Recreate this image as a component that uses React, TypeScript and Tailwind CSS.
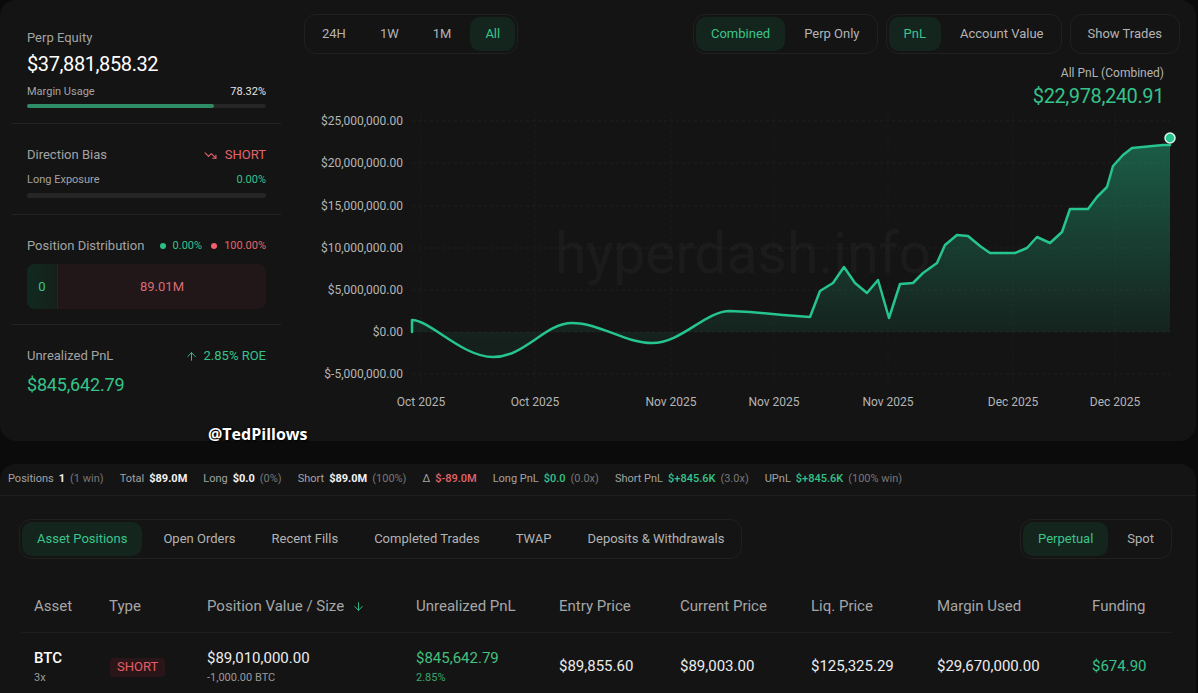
import React from "react";
import { TrendingDown, ArrowUp, ArrowDown } from "lucide-react";

const LINE =
  "M412,332 L412,320 C430,320 462,357 493,357 C525,357 545,323 572,323 C600,323 625,343 652,343 C682,343 705,311 730,311 L750,312 L783,315 L810,317 L820,291 L833,283 L844,267 L855,283 L867,293 L878,280 L889,318 L900,284 L913,283 L923,273 L937,263 L945,245 L957,235 L968,236 L980,246 L990,253 L1015,253 L1027,248 L1037,237 L1050,243 L1062,232 L1070,209 L1088,209 L1097,197 L1107,187 L1113,166 L1123,155 L1132,148 L1163,145 L1170,145";
const AREA = LINE + " L1170,332 Z";

const Y_TICKS = [
  { y: 121, l: "$25,000,000.00" },
  { y: 163, l: "$20,000,000.00" },
  { y: 206, l: "$15,000,000.00" },
  { y: 248, l: "$10,000,000.00" },
  { y: 290, l: "$5,000,000.00" },
  { y: 332, l: "$0.00" },
  { y: 374, l: "$-5,000,000.00" },
];
const X_TICKS = [
  { x: 421, l: "Oct 2025" },
  { x: 535, l: "Oct 2025" },
  { x: 671, l: "Nov 2025" },
  { x: 774, l: "Nov 2025" },
  { x: 888, l: "Nov 2025" },
  { x: 1013, l: "Dec 2025" },
  { x: 1115, l: "Dec 2025" },
];

function Group({ items, active, wide }: { items: string[]; active: number; wide?: boolean }) {
  return (
    <div className={`flex rounded-xl border border-[#202020] p-[2px] ${wide ? "gap-[6px]" : "gap-1"}`}>
      {items.map((t, i) => (
        <div
          key={t}
          className={
            i === active
              ? "flex h-[34px] items-center rounded-[10px] bg-[#14251d] px-[15px] text-[13px] text-[#3cc48c]"
              : "flex h-[34px] items-center rounded-[10px] px-[15px] text-[13px] text-[#b3b3b3]"
          }
        >
          {t}
        </div>
      ))}
    </div>
  );
}

function Stat({
  label,
  value,
  vcls,
  paren,
}: {
  label: string;
  value: string;
  vcls: string;
  paren?: string;
}) {
  return (
    <div className="flex items-center gap-[5px] whitespace-nowrap">
      <span className="text-[#a3a3a3]">{label}</span>
      <span className={vcls}>{value}</span>
      {paren && <span className="text-[#777777]">{paren}</span>}
    </div>
  );
}

const COLS = "grid grid-cols-[75px_98px_209px_143px_121px_131px_126px_155px_93px]";

export default function App() {
  return (
    <div className="relative h-[693px] w-[1198px] overflow-hidden bg-[#0b0b0b] font-['Roboto',sans-serif]">
      {/* Top card */}
      <div className="mr-[2px] flex h-[441px] rounded-2xl bg-[#141414]">
        {/* Left panel */}
        <div className="w-[293px] shrink-0 px-3">
          <div className="border-b border-[#222222] px-[15px] pb-[15px] pt-[30px]">
            <div className="text-[13px] leading-4 text-[#a3a3a3]">Perp Equity</div>
            <div className="mt-[6px] text-[20px] leading-6 tracking-[-0.02em] text-white">$37,881,858.32</div>
            <div className="mt-[9px] flex justify-between text-[11px] leading-[14px]">
              <span className="text-[#a3a3a3]">Margin Usage</span>
              <span className="text-[#e5e5e5]">78.32%</span>
            </div>
            <div className="mt-[5px] h-1 rounded-full bg-[#262626]">
              <div className="h-full w-[78.32%] rounded-full bg-[#2e8c66]" />
            </div>
          </div>

          <div className="border-b border-[#222222] px-[15px] pb-[16px] pt-[23px]">
            <div className="flex items-center justify-between text-[13px] leading-4">
              <span className="text-[#a3a3a3]">Direction Bias</span>
              <span className="flex items-center gap-2 text-[#e5646b]">
                <TrendingDown size={13} strokeWidth={2} />
                SHORT
              </span>
            </div>
            <div className="mt-[10px] flex justify-between text-[11px] leading-[14px]">
              <span className="text-[#a3a3a3]">Long Exposure</span>
              <span className="text-[#34c38a]">0.00%</span>
            </div>
            <div className="mt-[6px] h-[5px] rounded-full bg-[#262626]" />
          </div>

          <div className="border-b border-[#222222] px-[15px] pb-[15px] pt-[23px]">
            <div className="flex items-center justify-between leading-4">
              <span className="text-[13px] text-[#a3a3a3]">Position Distribution</span>
              <span className="flex items-center text-[11px]">
                <span className="h-[6px] w-[6px] rounded-full bg-[#2ebd85]" />
                <span className="ml-[7px] text-[#34c38a]">0.00%</span>
                <span className="ml-[9px] h-[6px] w-[6px] rounded-full bg-[#f0616d]" />
                <span className="ml-[7px] text-[#e5646b]">100.00%</span>
              </span>
            </div>
            <div className="mt-[10px] flex h-[45px] overflow-hidden rounded-lg">
              <div className="flex w-[31px] items-center justify-center border-r border-[#262626] bg-gradient-to-r from-[#0f2a20] to-[#15201b] text-[13px] text-[#3cc48c]">
                0
              </div>
              <div className="flex flex-1 items-center justify-center bg-[#211618] text-[13px] text-[#d96b77]">
                89.01M
              </div>
            </div>
          </div>

          <div className="px-[15px] pt-[23px]">
            <div className="flex items-center justify-between text-[13px] leading-4">
              <span className="text-[#a3a3a3]">Unrealized PnL</span>
              <span className="flex items-center gap-[6px] text-[#34c38a]">
                <ArrowUp size={13} strokeWidth={1.75} />
                2.85% ROE
              </span>
            </div>
            <div className="mt-[10px] text-[18px] leading-[22px] tracking-[-0.01em] text-[#34c38a]">$845,642.79</div>
          </div>
        </div>

        {/* Chart column */}
        <div className="flex flex-1 flex-col">
          <div className="flex items-center pl-[11px] pr-4 pt-[14px]">
            <Group items={["24H", "1W", "1M", "All"]} active={3} />
            <div className="ml-auto flex gap-2">
              <Group items={["Combined", "Perp Only"]} active={0} />
              <Group items={["PnL", "Account Value"]} active={0} />
              <Group items={["Show Trades"]} active={-1} />
            </div>
          </div>
          <div className="mt-[11px] flex flex-col items-end pr-[32px]">
            <div className="text-[12px] leading-4 text-[#b3b3b3]">All PnL (Combined)</div>
            <div className="mt-[3px] text-[20px] leading-6 tracking-[-0.02em] text-[#34c38a]">$22,978,240.91</div>
          </div>
          <svg width="903" height="333" viewBox="293 108 903 333" className="block">
            <defs>
              <linearGradient id="pnlfill" x1="0" y1="138" x2="0" y2="340" gradientUnits="userSpaceOnUse">
                <stop offset="0" stopColor="#25c48d" stopOpacity="0.42" />
                <stop offset="1" stopColor="#25c48d" stopOpacity="0.07" />
              </linearGradient>
            </defs>
            {Y_TICKS.map((t) => (
              <line key={t.y} x1="412" x2="1170" y1={t.y} y2={t.y} stroke="#1e1e1e" strokeDasharray="3 3" />
            ))}
            {X_TICKS.map((t, i) => (
              <line key={i} x1={t.x} x2={t.x} y1="112" y2="388" stroke="#1b1b1b" strokeDasharray="3 3" />
            ))}
            <path d={AREA} fill="url(#pnlfill)" />
            <text
              x="743"
              y="273"
              textAnchor="middle"
              fontFamily="Roboto, sans-serif"
              fontSize="57"
              fill="#ffffff"
              opacity="0.026"
            >
              hyperdash.info
            </text>
            <path
              d={LINE}
              fill="none"
              stroke="#26c48e"
              strokeWidth="2.5"
              strokeLinejoin="round"
              strokeLinecap="round"
            />
            <circle cx="1170" cy="138" r="5" fill="#26c48e" stroke="#dff5ea" strokeWidth="1.5" />
            {Y_TICKS.map((t) => (
              <text
                key={t.l}
                x="403"
                y={t.y}
                textAnchor="end"
                dominantBaseline="central"
                fontFamily="Roboto, sans-serif"
                fontSize="12"
                fill="#b5b5b5"
              >
                {t.l}
              </text>
            ))}
            {X_TICKS.map((t, i) => (
              <text
                key={i}
                x={t.x}
                y="402"
                textAnchor="middle"
                dominantBaseline="central"
                fontFamily="Roboto, sans-serif"
                fontSize="12"
                fill="#b5b5b5"
              >
                {t.l}
              </text>
            ))}
          </svg>
        </div>
      </div>

      {/* Bottom card */}
      <div className="relative mr-[2px] mt-[23px] h-[229px] overflow-hidden rounded-t-2xl bg-[#141414]">
        <div className="flex h-[32px] items-center gap-[16px] border-b border-[#1f1f1f] pl-2 text-[11px]">
          <Stat label="Positions" value="1" vcls="font-bold text-[#f2f2f2]" paren="(1 win)" />
          <Stat label="Total" value="$89.0M" vcls="font-bold text-[#f2f2f2]" />
          <Stat label="Long" value="$0.0" vcls="font-bold text-[#f2f2f2]" paren="(0%)" />
          <Stat label="Short" value="$89.0M" vcls="font-bold text-[#f2f2f2]" paren="(100%)" />
          <Stat label="Δ" value="$-89.0M" vcls="font-medium text-[#e5646b]" />
          <Stat label="Long PnL" value="$0.0" vcls="font-medium text-[#34c38a]" paren="(0.0x)" />
          <Stat label="Short PnL" value="$+845.6K" vcls="font-medium text-[#34c38a]" paren="(3.0x)" />
          <Stat label="UPnL" value="$+845.6K" vcls="font-medium text-[#34c38a]" paren="(100% win)" />
        </div>

        <div className="relative pl-[19px] pr-[24px]">
          <div className="mt-[23px] flex items-start justify-between">
            <Group
              items={["Asset Positions", "Open Orders", "Recent Fills", "Completed Trades", "TWAP", "Deposits & Withdrawals"]}
              active={0}
              wide
            />
            <Group items={["Perpetual", "Spot"]} active={0} />
          </div>

          <div className="ml-[2px] mt-[21px]">
            <div className={`${COLS} h-[53px] items-center border-b border-[#1d1d1d] text-[15px] text-[#a6a6a6]`}>
              <div className="pl-[13px]">Asset</div>
              <div className="pl-[13px]">Type</div>
              <div className="flex items-center gap-[8px] pl-[13px]">
                Position Value / Size
                <ArrowDown size={13} strokeWidth={1.75} className="text-[#34c38a]" />
              </div>
              <div className="pl-[13px]">Unrealized PnL</div>
              <div className="pl-[13px]">Entry Price</div>
              <div className="pl-[13px]">Current Price</div>
              <div className="pl-[13px]">Liq. Price</div>
              <div className="pl-[13px]">Margin Used</div>
              <div className="pl-[13px]">Funding</div>
            </div>
            <div className={`${COLS} h-[67px] items-center text-[15px] text-[#ececec]`}>
              <div className="pl-[13px]">
                <div className="font-medium leading-5 text-white">BTC</div>
                <div className="mt-[3px] text-[11px] leading-[14px] text-[#9a9a9a]">3x</div>
              </div>
              <div className="pl-[14px]">
                <span className="inline-flex h-[19px] items-center rounded bg-[#2a1618] px-[7px] text-[13px] text-[#e35d66]">
                  SHORT
                </span>
              </div>
              <div className="pl-[13px]">
                <div className="leading-5">$89,010,000.00</div>
                <div className="mt-[3px] text-[11px] leading-[14px] text-[#9a9a9a]">-1,000.00 BTC</div>
              </div>
              <div className="pl-[13px]">
                <div className="leading-5 text-[#45c07e]">$845,642.79</div>
                <div className="mt-[3px] text-[11px] leading-[14px] text-[#3aa86c]">2.85%</div>
              </div>
              <div className="pl-[13px]">$89,855.60</div>
              <div className="pl-[13px]">$89,003.00</div>
              <div className="pl-[13px]">$125,325.29</div>
              <div className="pl-[13px]">$29,670,000.00</div>
              <div className="pl-[13px] text-[#34c38a]">$674.90</div>
            </div>
          </div>
        </div>
      </div>

      {/* Watermark overlay */}
      <div className="absolute left-[208px] top-[423px] font-['Open_Sans',sans-serif] text-[16px] font-bold leading-[22px] text-white [text-shadow:0_0_2px_#000,1px_1px_2px_#000]">
        @TedPillows
      </div>
    </div>
  );
}
